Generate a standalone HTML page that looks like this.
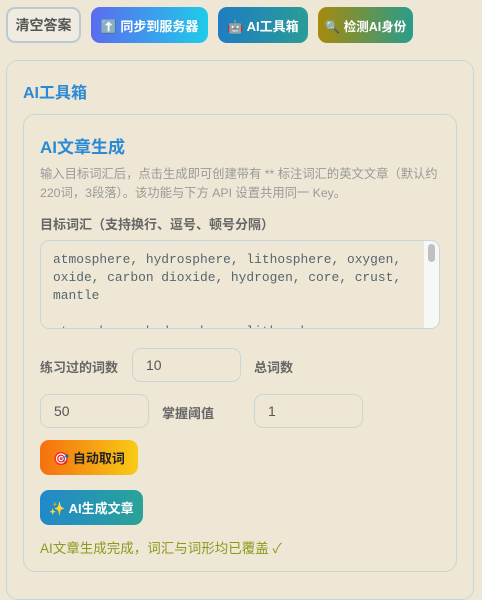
<!DOCTYPE html>
<html><head><meta charset="utf-8"><style>
*{box-sizing:border-box;margin:0;padding:0}
body{width:482px;height:583px;background:#efe7d6;font-family:"Liberation Sans","Noto Sans CJK SC",sans-serif;position:relative;overflow:hidden}
.a{position:absolute;white-space:nowrap}
.btn{position:absolute;height:36px;border-radius:9px;color:#fff;font-weight:bold;font-size:13px;display:flex;align-items:center;justify-content:center}
.inp{position:absolute;height:34px;border:1.5px solid #c6d6da;border-radius:9px;font-size:14px;color:#555;padding-left:13px;display:flex;align-items:center}
.lbl{position:absolute;font-size:13px;font-weight:bold;color:#666}
</style></head><body>
<div class="btn" style="left:6px;top:7px;width:75px;background:#f0ebe0;border:2px solid #b9cbd0;color:#555;font-size:14px">清空答案</div>
<div class="btn" style="left:91px;top:7px;width:117px;background:linear-gradient(90deg,#5b6cf0,#1fcbe8)">⬆️ 同步到服务器</div>
<div class="btn" style="left:218px;top:7px;width:90px;background:linear-gradient(90deg,#1e7dc2,#2a9c98)">🤖 AI工具箱</div>
<div class="btn" style="left:318px;top:7px;width:95px;background:linear-gradient(90deg,#a68a0c,#2a9c8c);font-size:12.5px">🔍 检测AI身份</div>
<div class="a" style="left:6px;top:60px;width:468px;height:540px;border:1.5px solid #c6d6da;border-radius:12px"></div>
<div class="a" style="left:23px;top:79px;font-size:16px;font-weight:bold;color:#2a8ad4">AI工具箱</div>
<div class="a" style="left:23px;top:114px;width:434px;height:458px;border:1.5px solid #c6d6da;border-radius:12px"></div>
<div class="a" style="left:40px;top:133px;font-size:17px;font-weight:bold;color:#2a8ad4">AI文章生成</div>
<div class="a" style="left:40px;top:165px;font-size:12.3px;color:#999;line-height:19px">输入目标词汇后，点击生成即可创建带有 ** 标注词汇的英文文章（默认约<br>220词，3段落）。该功能与下方 API 设置共用同一 Key。</div>
<div class="lbl" style="left:40px;top:214px">目标词汇（支持换行、逗号、顿号分隔）</div>
<div class="a" style="left:40px;top:240px;width:400px;height:89px;border:1.5px solid #c6d6da;border-radius:9px;overflow:hidden">
<div style="position:absolute;left:12px;top:10px;font-family:'Liberation Mono',monospace;font-size:12.9px;line-height:18px;color:#56666c">atmosphere, hydrosphere, lithosphere, oxygen,<br>oxide, carbon dioxide, hydrogen, core, crust,<br>mantle<br><br>atmosphere, hydrosphere, lithosphere</div>
<div style="position:absolute;right:0;top:0;width:15px;height:89px;background:#f7f7f5"><div style="margin:3px 4px;width:7px;height:18px;border-radius:4px;background:#c0c0c0"></div></div>
</div>
<div class="lbl" style="left:40px;top:357px">练习过的词数</div>
<div class="inp" style="left:132px;top:348px;width:109px">10</div>
<div class="lbl" style="left:254px;top:357px">总词数</div>
<div class="inp" style="left:40px;top:394px;width:109px">50</div>
<div class="lbl" style="left:162px;top:403px">掌握阈值</div>
<div class="inp" style="left:254px;top:394px;width:109px">1</div>
<div class="btn" style="left:40px;top:440px;width:98px;height:35px;background:linear-gradient(90deg,#f5700f,#f8cb16);color:#222">🎯 自动取词</div>
<div class="btn" style="left:40px;top:490px;width:103px;height:35px;background:linear-gradient(90deg,#2288cc,#2aa398)">✨ AI生成文章</div>
<div class="a" style="left:40px;top:537px;font-size:13.5px;color:#8a9a1a">AI文章生成完成，词汇与词形均已覆盖 ✓</div>
</body></html>
